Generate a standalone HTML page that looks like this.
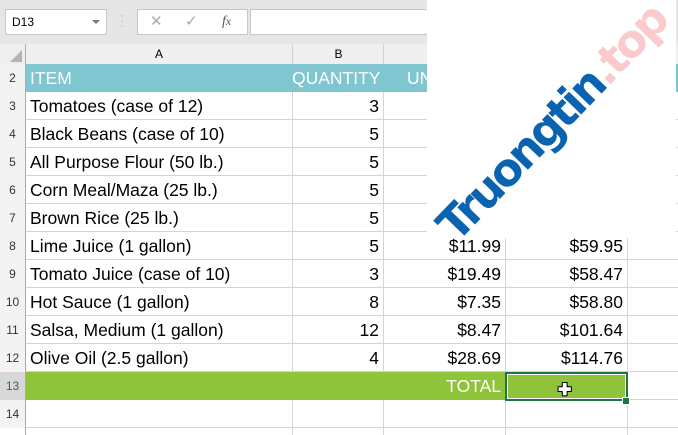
<!DOCTYPE html><html><head><style>
body{margin:0;width:678px;height:435px;overflow:hidden;background:#fff;font-family:"Liberation Sans",sans-serif;position:relative}
.a{position:absolute}
.cell{position:absolute;font-size:17.5px;color:#000;white-space:nowrap;line-height:28px}
.r{text-align:right}
.rn{position:absolute;left:0;width:25px;font-size:12px;color:#333;text-align:center;line-height:28px;background:#f3f3f3}
</style></head><body>
<div class="a" style="left:0;top:0;width:678px;height:44px;background:#e6e6e6"></div>
<div class="a" style="left:5px;top:9px;width:100px;height:24px;background:#fff;border:1px solid #c6c6c6;font-size:12px;line-height:24px;text-indent:6px">D13<span class="a" style="left:86px;top:10px;border:4px solid transparent;border-top:4px solid #777"></span></div>
<div class="a" style="left:120px;top:14px;color:#aaa;font-size:11px;line-height:5px">·<br>·<br>·</div>
<div class="a" style="left:137px;top:9px;width:109px;height:24px;background:#fff;border:1px solid #c6c6c6;font-size:15px;line-height:24px;color:#aaa"><span class="a" style="left:12px">✕</span><span class="a" style="left:47px">✓</span><span class="a" style="left:84px;color:#555;font-style:italic;font-family:'Liberation Serif';font-size:14px">f<small>x</small></span></div>
<div class="a" style="left:250px;top:9px;width:200px;height:24px;background:#fff;border:1px solid #c6c6c6"></div>
<div class="a" style="left:0;top:44px;width:678px;height:20px;background:#efefef;border-bottom:1px solid #ababab;font-size:12px;line-height:20px"></div>
<div class="a" style="left:10px;top:50px;border-left:12px solid transparent;border-bottom:12px solid #b4b4b4"></div>
<div class="a" style="left:26px;top:44px;width:266px;font-size:12px;line-height:20px;text-align:center">A</div>
<div class="a" style="left:292px;top:44px;width:91px;font-size:12px;line-height:20px;text-align:center;border-left:1px solid #d0d0d0">B</div>
<div class="a" style="left:383px;top:44px;height:20px;border-left:1px solid #d0d0d0"></div>
<div class="a" style="left:25px;top:44px;height:391px;border-left:1px solid #ababab"></div>
<div class="a" style="left:26px;top:64px;width:652px;height:371px;background:
linear-gradient(90deg,transparent 266px,#d4d4d4 266px,#d4d4d4 267px,transparent 267px,transparent 357px,#d4d4d4 357px,#d4d4d4 358px,transparent 358px,transparent 479px,#d4d4d4 479px,#d4d4d4 480px,transparent 480px,transparent 601px,#d4d4d4 601px,#d4d4d4 602px,transparent 602px),
repeating-linear-gradient(180deg,transparent 0,transparent 27px,#d4d4d4 27px,#d4d4d4 28px)"></div>
<div class="a" style="left:26px;top:64px;width:652px;height:28px;background:#7fc6d1"></div>
<div class="a" style="left:26px;top:372px;width:602px;height:28px;background:#8fc33a"></div>
<div class="a" style="left:505px;top:372px;width:119px;height:25px;border:2px solid #217346;box-shadow:inset 0 0 0 1px #fff"></div>
<div class="a" style="left:622px;top:397px;width:6px;height:6px;background:#217346;border:1px solid #fff"></div>
<div class="a" style="left:558px;top:380px;font-size:16px;font-weight:bold;color:#fff;text-shadow:0 0 1px #000,1px 1px 0 #000,-1px -1px 0 #000,1px -1px 0 #000,-1px 1px 0 #000">✚</div>
<div class="rn" style="top:64px">2</div><div class="rn" style="top:92px">3</div><div class="rn" style="top:120px">4</div><div class="rn" style="top:148px">5</div><div class="rn" style="top:176px">6</div><div class="rn" style="top:204px">7</div><div class="rn" style="top:232px">8</div><div class="rn" style="top:260px">9</div><div class="rn" style="top:288px">10</div><div class="rn" style="top:316px">11</div><div class="rn" style="top:344px">12</div><div class="rn" style="top:372px;background:#d8d8d8;color:#217346">13</div><div class="rn" style="top:400px">14</div>
<div class="cell" style="left:30px;top:64px;color:#fff">ITEM</div>
<div class="cell" style="left:292px;top:64px;color:#fff">QUANTITY</div>
<div class="cell" style="left:407px;top:64px;color:#fff">UNIT</div>
<div class="cell" style="left:30px;top:92px">Tomatoes (case of 12)</div><div class="cell r" style="left:292px;width:87px;top:92px">3</div>
<div class="cell" style="left:30px;top:120px">Black Beans (case of 10)</div><div class="cell r" style="left:292px;width:87px;top:120px">5</div>
<div class="cell" style="left:30px;top:148px">All Purpose Flour (50 lb.)</div><div class="cell r" style="left:292px;width:87px;top:148px">5</div>
<div class="cell" style="left:30px;top:176px">Corn Meal/Maza (25 lb.)</div><div class="cell r" style="left:292px;width:87px;top:176px">5</div>
<div class="cell" style="left:30px;top:204px">Brown Rice (25 lb.)</div><div class="cell r" style="left:292px;width:87px;top:204px">5</div>
<div class="cell" style="left:30px;top:232px">Lime Juice (1 gallon)</div><div class="cell r" style="left:292px;width:87px;top:232px">5</div><div class="cell r" style="left:383px;width:118px;top:232px">$11.99</div><div class="cell r" style="left:505px;width:118px;top:232px">$59.95</div>
<div class="cell" style="left:30px;top:260px">Tomato Juice (case of 10)</div><div class="cell r" style="left:292px;width:87px;top:260px">3</div><div class="cell r" style="left:383px;width:118px;top:260px">$19.49</div><div class="cell r" style="left:505px;width:118px;top:260px">$58.47</div>
<div class="cell" style="left:30px;top:288px">Hot Sauce (1 gallon)</div><div class="cell r" style="left:292px;width:87px;top:288px">8</div><div class="cell r" style="left:383px;width:118px;top:288px">$7.35</div><div class="cell r" style="left:505px;width:118px;top:288px">$58.80</div>
<div class="cell" style="left:30px;top:316px">Salsa, Medium (1 gallon)</div><div class="cell r" style="left:292px;width:87px;top:316px">12</div><div class="cell r" style="left:383px;width:118px;top:316px">$8.47</div><div class="cell r" style="left:505px;width:118px;top:316px">$101.64</div>
<div class="cell" style="left:30px;top:344px">Olive Oil (2.5 gallon)</div><div class="cell r" style="left:292px;width:87px;top:344px">4</div><div class="cell r" style="left:383px;width:118px;top:344px">$28.69</div><div class="cell r" style="left:505px;width:118px;top:344px">$114.76</div>
<div class="cell r" style="left:383px;width:118px;top:372px;color:#fff">TOTAL</div>
<div class="a" style="left:427px;top:0;width:249px;height:238px;background:#fff"></div>
<div class="a" style="left:382px;top:100px;width:340px;font-size:45px;font-weight:900;font-family:'DejaVu Sans',sans-serif;letter-spacing:-3px;transform:rotate(-46deg);transform-origin:center;white-space:nowrap;line-height:45px;text-align:center"><span style="color:#0a63b1">Truongtin</span><span style="color:#fbcaca">.top</span></div>
</body></html>
